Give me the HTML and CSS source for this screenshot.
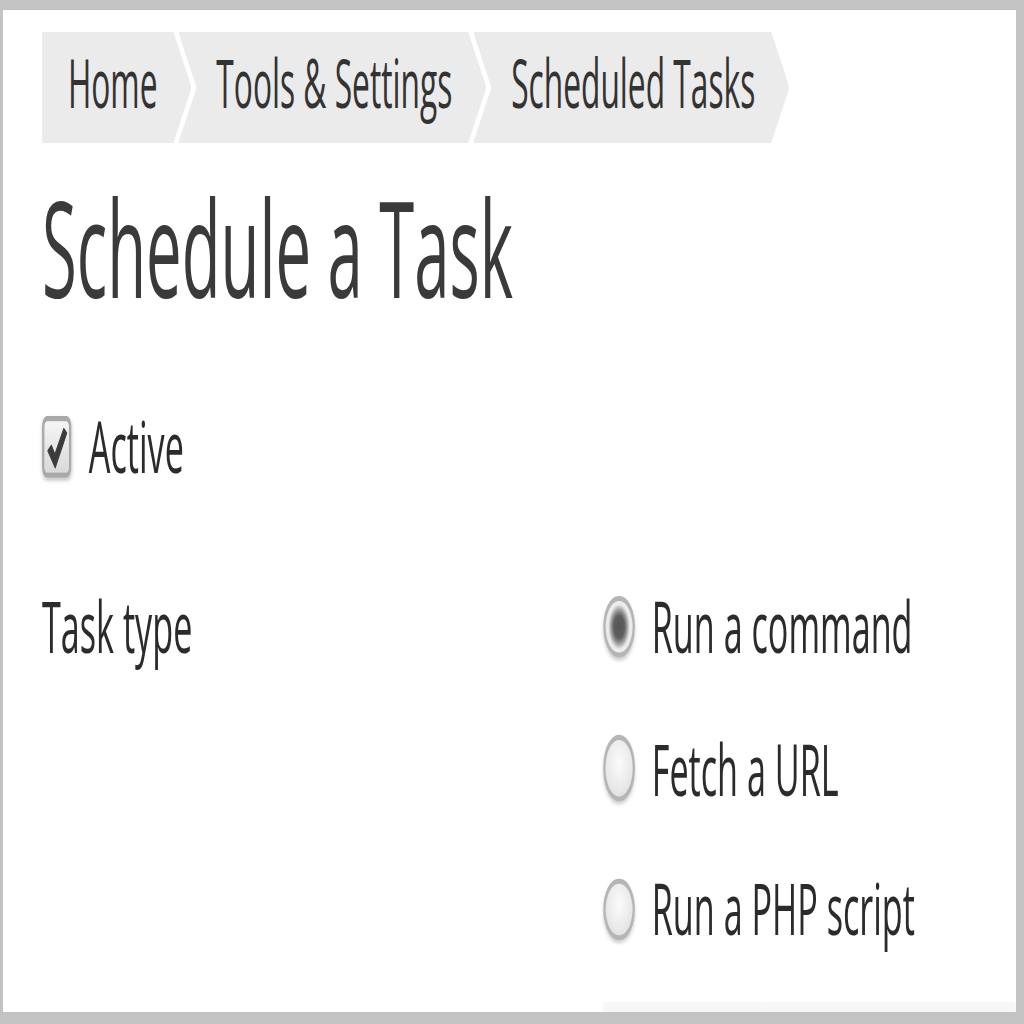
FILE: index.html
```html
<!DOCTYPE html>
<html lang="en">
<head>
<meta charset="utf-8">
<title>Schedule a Task</title>
<link rel="stylesheet" href="styles.css">
</head>
<body>
<div class="frame">
  <div class="page">
    <nav class="crumbs">
      <span class="crumb crumb-first">Home</span>
      <span class="crumb">Tools &amp; Settings</span>
      <span class="crumb">Scheduled Tasks</span>
    </nav>
    <h1 class="title">Schedule a Task</h1>
    <div class="check-row">
      <span class="checkbox">
        <svg viewBox="0 0 12 12" width="12" height="12"><path d="M1.7 6.3 L3.4 5.1 L5.1 7.2 L9.5 1.2 L10.9 2.2 L5.3 10.2 Z" fill="#3c3c3c" stroke="#3c3c3c" stroke-width="0.5" stroke-linejoin="round"/></svg>
      </span>
      <span class="label">Active</span>
    </div>
    <div class="field">
      <div class="field-label">Task type</div>
      <div class="options">
        <div class="option"><span class="radio radio-on"></span><span>Run a command</span></div>
        <div class="option"><span class="radio"></span><span>Fetch a URL</span></div>
        <div class="option"><span class="radio"></span><span>Run a PHP script</span></div>
      </div>
    </div>
    <div class="strip"></div>
  </div>
</div>
</body>
</html>
```
FILE: styles.css
```css
html, body {
  margin: 0;
  padding: 0;
}
body {
  background: #c3c3c3;
  width: 1024px;
  height: 1024px;
  overflow: hidden;
}
.frame {
  margin: 10px 8px 0 3px;
  height: 1002px;
  background: #ffffff;
  overflow: hidden;
}
.page {
  width: 415px;
  box-sizing: border-box;
  padding: 4.3px 0 0 16px;
  transform: scale(2.44, 5.14);
  transform-origin: 0 0;
  font-family: "Open Sans", "Liberation Sans", sans-serif;
  font-size: 14px;
  color: #2b2b2b;
}
.crumbs {
  display: flex;
  height: 21.6px;
  font-size: 13px;
}
.crumb {
  background: #ebebeb;
  line-height: 19.6px;
  padding: 0.8px 14px 1.2px 15.6px;
  margin-left: -5.5px;
  white-space: nowrap;
  color: #333;
  clip-path: polygon(0 0, calc(100% - 7.5px) 0, 100% 50%, calc(100% - 7.5px) 100%, 0 100%, 7.5px 50%);
}
.crumb-first {
  margin-left: 0;
  padding-left: 10.6px;
  clip-path: polygon(0 0, calc(100% - 7.5px) 0, 100% 50%, calc(100% - 7.5px) 100%, 0 100%);
}
.title {
  margin: 4.4px 0 0;
  font-size: 26px;
  font-weight: 400;
  line-height: 32px;
  color: #3a3a3a;
}
.check-row {
  display: flex;
  align-items: center;
  gap: 7.2px;
  margin-top: 13.8px;
  line-height: 18px;
}
.checkbox {
  width: 12px;
  height: 12px;
  box-sizing: border-box;
  border: 1px solid #a9a9a9;
  border-radius: 2px;
  background: linear-gradient(#f5f5f5, #d9d9d9);
  box-shadow: 0 0.5px 1px rgba(0, 0, 0, 0.2);
  display: flex;
  align-items: center;
  justify-content: center;
}
.checkbox svg {
  width: 11px;
  height: 11px;
}
.field {
  display: grid;
  grid-template-columns: 229.9px 1fr;
  margin-top: 17px;
  line-height: 18px;
}
.options {
  display: flex;
  flex-direction: column;
  gap: 9.6px;
}
.option {
  display: flex;
  align-items: center;
  gap: 7px;
}
.radio {
  width: 13px;
  height: 12.4px;
  box-sizing: border-box;
  border-radius: 50%;
  border: 1px solid #b5b5b5;
  background: radial-gradient(circle at 50% 40%, #fbfbfb 0, #e9e9e9 60%, #d6d6d6 100%);
  box-shadow: 0 0.6px 1px rgba(0, 0, 0, 0.18);
}
.radio-on {
  background: radial-gradient(circle, #555 0, #5e5e5e 2.2px, #9d9d9d 3.3px, #eeeeee 4.4px, #dedede 100%);
}
.strip {
  margin-top: 8.4px;
  margin-left: 229.9px;
  height: 40px;
  background: linear-gradient(#f7f7f7, #ebebeb);
}
```
